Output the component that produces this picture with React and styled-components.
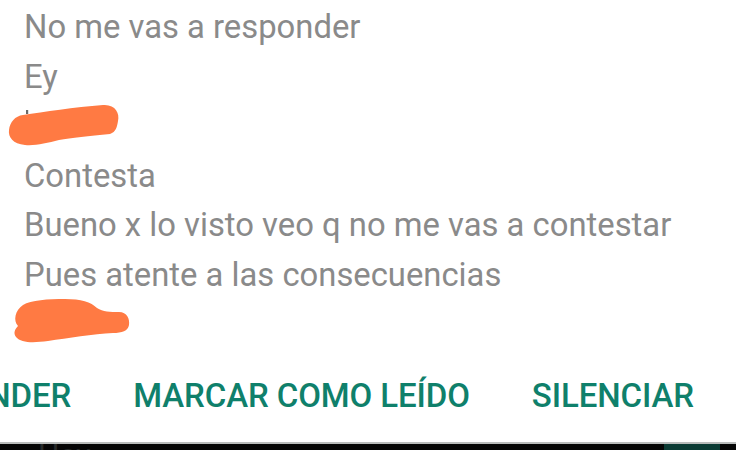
import React from "react";
import styled, { createGlobalStyle } from "styled-components";

const Global = createGlobalStyle`
  html, body { margin: 0; padding: 0; background: #ffffff; }
  body { width: 736px; height: 450px; overflow: hidden; }
  #root { height: 450px; }
`;

const Screen = styled.div`
  width: 736px;
  height: 450px;
  display: flex;
  flex-direction: column;
  background: #ffffff;
  font-family: Roboto, "Noto Sans", sans-serif;
  overflow: hidden;
`;

const Notification = styled.section`
  flex: 1;
  display: flex;
  flex-direction: column;
  padding-top: 3px;
`;

const Messages = styled.div`
  display: flex;
  flex-direction: column;
  padding-left: 24px;
`;

const Line = styled.div`
  height: 49.5px;
  line-height: 49.5px;
  font-size: 32.8px;
  color: #8a8a8a;
  white-space: nowrap;
  position: relative;
`;

const Blob = styled.svg`
  position: absolute;
  left: ${(p) => p.$left}px;
  top: ${(p) => p.$top}px;
  overflow: visible;
`;

const Actions = styled.div`
  margin-top: 21px;
  display: flex;
  justify-content: flex-end;
  gap: 62px;
  padding-right: 42px;
  overflow: hidden;
`;

const Action = styled.span`
  flex: none;
  font-size: 33px;
  line-height: 50px;
  font-weight: 500;
  color: #0f806b;
  white-space: nowrap;
  letter-spacing: -0.1px;
`;

const BottomBar = styled.div`
  height: 6.5px;
  flex: none;
  background: #050505;
  border-top: 2px solid #b9bcbb;
  display: flex;
  align-items: flex-start;
  justify-content: space-between;
  padding: 0 16px 0 38px;
  overflow: hidden;
`;

const DayLabel = styled.span`
  font-size: 30px;
  line-height: 30px;
  color: #262929;
  margin-top: -4px;
`;

const Chip = styled.span`
  width: 56px;
  height: 7px;
  background: #0b3b34;
`;

function Redacted({ left, top, variant }) {
  if (variant === 1) {
    return (
      <Blob $left={left} $top={top} width="110" height="41" viewBox="0 0 110 41">
        <rect x="17" y="5" width="2.2" height="4" fill="#6a6a6a" />
        <path
          d="M14 10 C35 7 65 2 94 0 C106 -1 111 8 109 16 C108 22 107 27 101 29 C80 31 62 33 50 35 C38 38 26 41 16 40 C4 39 -1 32 0 25 C1 17 6 11 14 10 Z"
          fill="#ff7a43"
        />
      </Blob>
    );
  }
  return (
    <Blob $left={left} $top={top} width="116" height="44" viewBox="0 0 116 44">
      <path
        d="M10 6 C18 1 35 0 52 0 C68 0 78 3 84 9 C90 13 97 13 106 13 C114 13 117 20 116 26 C115 32 109 34 100 34 C80 35 55 39 35 42 C20 44 8 44 3 38 C0 34 2 30 5 27 C0 22 2 11 10 6 Z"
        fill="#ff7a43"
      />
    </Blob>
  );
}

const lines = [
  { text: "No me vas a responder" },
  { text: "Ey" },
  { redacted: 1 },
  { text: "Contesta" },
  { text: "Bueno x lo visto veo q no me vas a contestar" },
  { text: "Pues atente a las consecuencias" },
  { redacted: 2 },
];

export default function App() {
  return (
    <>
      <Global />
      <Screen>
        <Notification>
          <Messages>
            {lines.map((l, i) => (
              <Line key={i}>
                {l.text}
                {l.redacted === 1 && <Redacted variant={1} left={-15} top={3} />}
                {l.redacted === 2 && <Redacted variant={2} left={-11} top={-1} />}
              </Line>
            ))}
          </Messages>
          <Actions>
            <Action>RESPONDER</Action>
            <Action>MARCAR COMO LEÍDO</Action>
            <Action>SILENCIAR</Action>
          </Actions>
        </Notification>
        <BottomBar>
          <DayLabel>Hoy</DayLabel>
          <Chip />
        </BottomBar>
      </Screen>
    </>
  );
}
